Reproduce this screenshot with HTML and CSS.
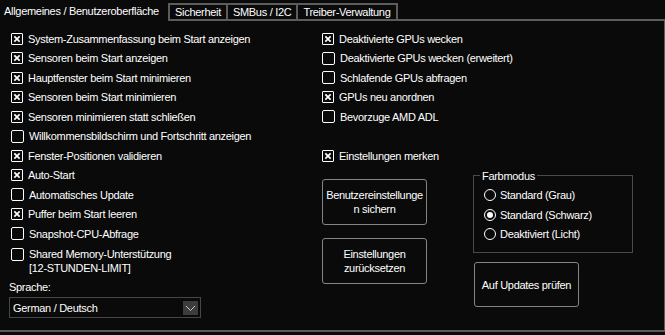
FILE: index.html
```html
<!DOCTYPE html>
<html lang="de">

<head>
    <meta charset="UTF-8">
    <meta name="viewport" content="width=device-width, initial-scale=1.0">
    <title>Einstellungen</title>
    <link rel="stylesheet" href="styles.css">
</head>

<body>
    <svg width="0" height="0" style="position: absolute;">
        <symbol id="cross" viewBox="0 0 12 12">
            <path d="M3.5 3.5 L8.5 8.5 M8.5 3.5 L3.5 8.5" stroke="#fff" stroke-width="2" stroke-linecap="square" />
        </symbol>
    </svg>

    <div class="tabs">
        <div class="tab active">Allgemeines / Benutzeroberfläche</div>
        <div class="tab">Sicherheit</div>
        <div class="tab">SMBus / I2C</div>
        <div class="tab">Treiber-Verwaltung</div>
    </div>

    <div class="panel">
        <div class="col-left">
            <div class="check on"><span class="box"><svg><use href="#cross" /></svg></span>System-Zusammenfassung beim Start anzeigen</div>
            <div class="check on"><span class="box"><svg><use href="#cross" /></svg></span>Sensoren beim Start anzeigen</div>
            <div class="check on"><span class="box"><svg><use href="#cross" /></svg></span>Hauptfenster beim Start minimieren</div>
            <div class="check on"><span class="box"><svg><use href="#cross" /></svg></span>Sensoren beim Start minimieren</div>
            <div class="check on"><span class="box"><svg><use href="#cross" /></svg></span>Sensoren minimieren statt schließen</div>
            <div class="check"><span class="box"></span>Willkommensbildschirm und Fortschritt anzeigen</div>
            <div class="check on"><span class="box"><svg><use href="#cross" /></svg></span>Fenster-Positionen validieren</div>
            <div class="check on"><span class="box"><svg><use href="#cross" /></svg></span>Auto-Start</div>
            <div class="check"><span class="box"></span>Automatisches Update</div>
            <div class="check on"><span class="box"><svg><use href="#cross" /></svg></span>Puffer beim Start leeren</div>
            <div class="check"><span class="box"></span>Snapshot-CPU-Abfrage</div>
            <div class="check multi"><span class="box"></span><span>Shared Memory-Unterstützung<br>[12-STUNDEN-LIMIT]</span></div>

            <div class="lang-label">Sprache:</div>
            <div class="select">
                <span>German / Deutsch</span>
                <span class="arrow">
                    <svg width="15" height="14" viewBox="0 0 15 14">
                        <path d="M3 5 L7.5 9.5 L12 5" fill="none" stroke="#c8c8c8" stroke-width="1" />
                    </svg>
                </span>
            </div>
        </div>

        <div class="col-right">
            <div class="check on"><span class="box"><svg><use href="#cross" /></svg></span>Deaktivierte GPUs wecken</div>
            <div class="check"><span class="box"></span>Deaktivierte GPUs wecken (erweitert)</div>
            <div class="check"><span class="box"></span>Schlafende GPUs abfragen</div>
            <div class="check on"><span class="box"><svg><use href="#cross" /></svg></span>GPUs neu anordnen</div>
            <div class="check"><span class="box"></span>Bevorzuge AMD ADL</div>
            <div class="check empty"></div>
            <div class="check on"><span class="box"><svg><use href="#cross" /></svg></span>Einstellungen merken</div>

            <div class="bottom">
                <div class="buttons">
                    <button class="btn">Benutzereinstellunge<br>n sichern</button>
                    <button class="btn">Einstellungen<br>zurücksetzen</button>
                </div>
                <div class="side">
                    <fieldset class="group">
                        <legend>Farbmodus</legend>
                        <div class="radio"><span class="dot"></span>Standard (Grau)</div>
                        <div class="radio on"><span class="dot"></span>Standard (Schwarz)</div>
                        <div class="radio"><span class="dot"></span>Deaktiviert (Licht)</div>
                    </fieldset>
                    <button class="btn update">Auf Updates prüfen</button>
                </div>
            </div>
        </div>
    </div>
</body>

</html>
```

FILE: styles.css
```css
body {
    margin: 0;
    background: #0a0a0a;
    color: #fff;
    font-family: "Liberation Sans", Arial, sans-serif;
    font-size: 11px;
    letter-spacing: -0.3px;
}

.tabs {
    display: flex;
    align-items: flex-end;
    height: 19px;
    white-space: nowrap;
}

.tab {
    height: 14px;
    line-height: 14px;
    padding: 0 5px;
    border: 2px solid #5c5c5c;
    border-bottom: none;
    margin-left: -2px;
}

.tab.active {
    position: relative;
    z-index: 1;
    width: 164px;
    height: 21px;
    line-height: 22px;
    margin: 0 0 -2px 0;
    padding: 0 0 0 4px;
    border: none;
    background: #0a0a0a;
}

.tab.active + .tab {
    margin-left: 0;
}

.panel {
    display: flex;
    height: 309px;
    border-top: 2px solid #5c5c5c;
    border-right: 1px solid #5c5c5c;
    border-bottom: 2px solid #5c5c5c;
}

.col-left {
    width: 311px;
    padding: 8px 0 0 11px;
}

.col-right {
    flex: 1;
    padding-top: 8px;
}

.check {
    display: flex;
    align-items: center;
    height: 19.5px;
    white-space: nowrap;
}

.check .box {
    width: 11px;
    height: 11px;
    border: 1px solid #fff;
    border-radius: 2px;
    margin-right: 5px;
    flex-shrink: 0;
}

.check .box svg {
    display: block;
    width: 11px;
    height: 11px;
}

.check.on .box {
    border-width: 1.5px;
    width: 10px;
    height: 10px;
    border-radius: 1px;
}

.check.on .box svg {
    width: 10px;
    height: 10px;
}

.check.multi {
    align-items: flex-start;
    height: auto;
    padding-top: 3px;
    line-height: 14px;
}

.check.multi .box {
    margin-top: 1px;
}

.lang-label {
    height: 19.5px;
    line-height: 19.5px;
    margin: 3px 0 0 -2px;
}

.select {
    display: flex;
    align-items: center;
    justify-content: space-between;
    width: 187px;
    height: 19px;
    margin-left: -2px;
    padding-left: 3px;
    border: 1px solid #464646;
}

.select .arrow {
    width: 15px;
    height: 14px;
    margin-right: 2px;
    background: #3c3c3c;
}

.select .arrow svg {
    display: block;
}

.bottom {
    display: flex;
    gap: 46px;
    align-items: flex-start;
}

.buttons {
    display: flex;
    flex-direction: column;
    gap: 13px;
    margin-top: 13px;
}

.btn {
    width: 105px;
    height: 46px;
    padding: 0;
    border: 1px solid #858585;
    border-radius: 3px;
    background: #0a0a0a;
    color: #fff;
    font-family: inherit;
    font-size: 11px;
    letter-spacing: inherit;
    line-height: 14px;
}

.side {
    display: flex;
    flex-direction: column;
    margin-top: 3px;
}

.group {
    width: 152px;
    margin: 0;
    padding: 3px 0 8px 6px;
    border: 1px solid #4a4a4a;
}

.group legend {
    padding: 0 2px;
    line-height: 14px;
}

.radio {
    display: flex;
    align-items: center;
    height: 19.5px;
    margin-left: 4px;
}

.radio .dot {
    position: relative;
    width: 10px;
    height: 10px;
    border: 1px solid #fff;
    border-radius: 50%;
    margin-right: 4px;
}

.radio.on .dot::after {
    content: "";
    position: absolute;
    left: 2px;
    top: 2px;
    width: 6px;
    height: 6px;
    border-radius: 50%;
    background: #fff;
}

.btn.update {
    height: 45px;
    margin: 9px 0 0 1px;
}
```
